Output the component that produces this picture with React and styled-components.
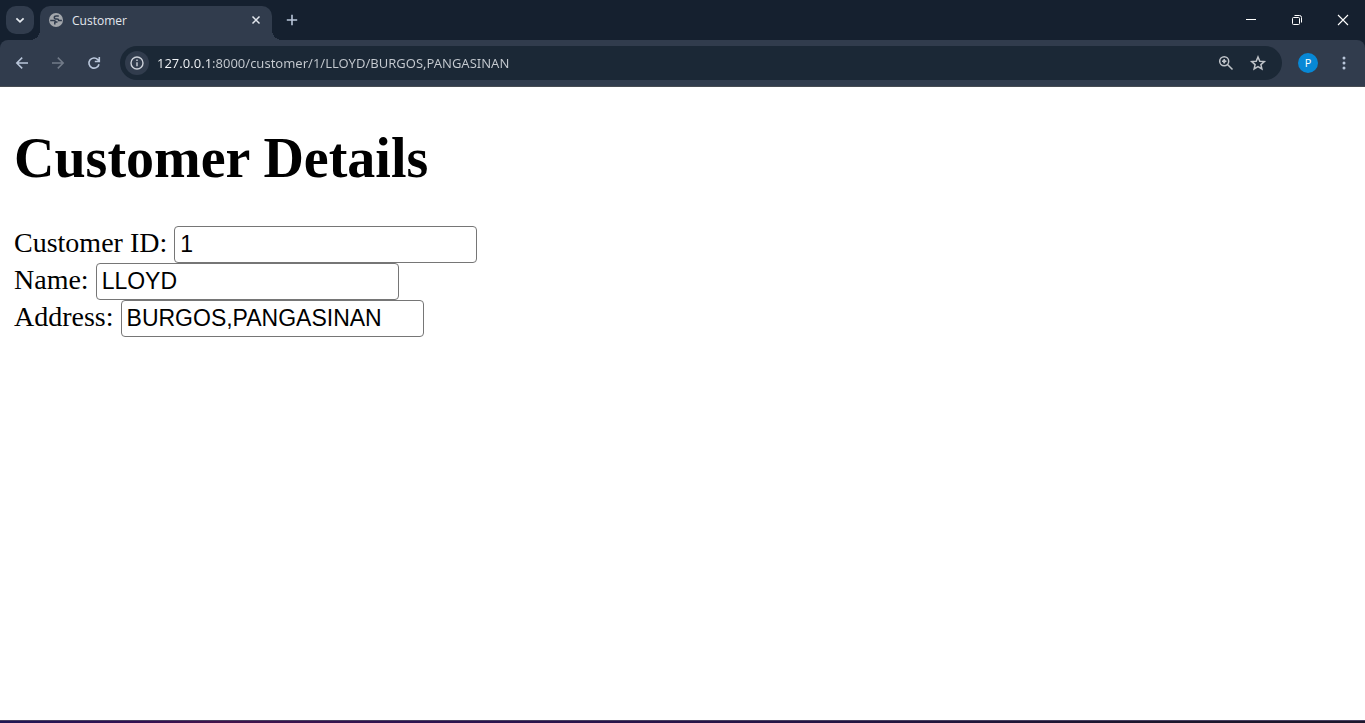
import React from "react";
import styled, { createGlobalStyle } from "styled-components";

const GlobalStyle = createGlobalStyle`
  body { margin: 0; background: #fff; }
  *, *::before, *::after { box-sizing: border-box; }
`;

const Window = styled.div`
  display: flex;
  flex-direction: column;
  min-height: 100vh;
`;

const TabStrip = styled.header`
  display: flex;
  align-items: flex-start;
  height: 40px;
  padding: 6px 0 0 6px;
  background: #15202f;
  font-family: "Open Sans", sans-serif;
`;

const IconButton = styled.button`
  display: flex;
  flex: none;
  align-items: center;
  justify-content: center;
  width: 28px;
  height: 28px;
  padding: 0;
  border: 0;
  border-radius: ${(p) => p.$radius || 0}px;
  background: ${(p) => p.$fill || "transparent"};
  color: ${(p) => p.$color || "#b9c6da"};
`;

const Tab = styled.div`
  position: relative;
  display: flex;
  align-items: center;
  width: 232px;
  height: 34px;
  margin: 0 6px;
  padding: 0 2px 6px 8px;
  border-radius: 10px 10px 0 0;
  background: #313c4d;
  color: #e3e7ee;

  &::before,
  &::after {
    content: "";
    position: absolute;
    bottom: 0;
    width: 10px;
    height: 10px;
  }
  &::before {
    right: 100%;
    background: radial-gradient(circle at 0 0, transparent 10px, #313c4d 10px);
  }
  &::after {
    left: 100%;
    background: radial-gradient(circle at 100% 0, transparent 10px, #313c4d 10px);
  }
`;

const TabTitle = styled.span`
  flex: 1;
  padding-left: 8px;
  font-size: 12px;
  line-height: 20px;
  padding-top: 2px;
`;

const WindowControls = styled.div`
  display: flex;
  flex: 1;
  justify-content: flex-end;
`;

const WindowButton = styled(IconButton)`
  width: 46px;
  color: #fff;
`;

const ToolbarBack = styled.div`
  background: #15202f;
`;

const Toolbar = styled.nav`
  display: flex;
  align-items: center;
  height: 47px;
  padding: 0 7px 0 8px;
  gap: 8px;
  border-bottom: 1px solid #474c52;
  border-radius: 8px 8px 0 0;
  background: #313c4d;
  font-family: "Open Sans", sans-serif;
`;

const AddressBar = styled.div`
  display: flex;
  flex: 1;
  align-items: center;
  height: 34px;
  margin: 0 4px;
  padding: 0 10px 0 5px;
  gap: 4px;
  border-radius: 17px;
  background: #1b2836;
`;

const SiteButton = styled(IconButton)`
  width: 24px;
  height: 24px;
`;

const AddressInput = styled.input`
  flex: 1;
  min-width: 0;
  padding: 0 0 0 4px;
  border: 0;
  outline: 0;
  background: linear-gradient(90deg, #f2f5f8 58px, #c6cbd1 58px);
  background-clip: text;
  color: transparent;
  font-family: "Noto Sans", sans-serif;
  font-size: 13px;
  line-height: 20px;
`;

const Avatar = styled.span`
  width: 20px;
  height: 20px;
  border-radius: 50%;
  background: #0788d6;
  color: #fff;
  font-family: "Open Sans", sans-serif;
  font-size: 11px;
  line-height: 20px;
  text-align: center;
`;

const Page = styled.main`
  flex: 1;
  padding: 39px 14px;
  background: #fff;
  color: #000;
  font-family: "Liberation Serif", serif;
  font-size: 28px;
`;

const Heading = styled.h1`
  margin: 0 0 36px;
  font-size: 56px;
  line-height: 64px;
`;

const Field = styled.div`
  display: flex;
  height: 37px;
  gap: 7px;
  line-height: 34px;
`;

const FieldInput = styled.input`
  width: 303px;
  height: 37px;
  padding: 0 5px;
  border: 1px solid #767676;
  border-radius: 4px;
  background: #fff;
  color: #000;
  font-family: "Liberation Sans", sans-serif;
  font-size: 23px;
`;

const DesktopEdge = styled.footer`
  height: 3px;
  border-top: 1px solid #47405f;
  background: linear-gradient(90deg, #1f1754, #321052 10%, #42134c 16%, #2d1350 30%, #241444 60%, #1c162c 85%);
`;

function Icon({ size = 20, stroke = 2, children }) {
  return (
    <svg width={size} height={size} viewBox={`0 0 ${size} ${size}`} fill="none" stroke="currentColor" strokeWidth={stroke} aria-hidden="true">
      {children}
    </svg>
  );
}

const fields = [
  { id: "customer-id", label: "Customer ID:", value: "1" },
  { id: "name", label: "Name:", value: "LLOYD" },
  { id: "address", label: "Address:", value: "BURGOS,PANGASINAN" },
];

export default function App() {
  return (
    <Window>
      <GlobalStyle />
      <TabStrip>
        <IconButton $fill="#313c4d" $radius={10} $color="#e6eaf0" aria-label="Search tabs">
          <Icon stroke={1.8}><path d="M6.4 8.4 10 11.8l3.6-3.4" /></Icon>
        </IconButton>
        <Tab>
          <Icon size={16}>
            <circle cx="8" cy="8" r="7" fill="#a3a7ac" stroke="none" />
            <path d="M10.8 3.9H8.2c-1.2 0-1.9.7-1.9 1.6 0 1 .8 1.6 2 1.6h.8c1 0 1.6.6 1.6 1.5h3.2M2.2 8.4h3.4c1.2 0 1.8.6 1.8 1.7h2.1M6.8 10v2.6" stroke="#313c4d" strokeWidth="1.5" />
          </Icon>
          <TabTitle>Customer</TabTitle>
          <IconButton $color="#e3e7ee" aria-label="Close tab">
            <Icon size={16} stroke={1.5}><path d="m4.5 4.5 7 7m0-7-7 7" /></Icon>
          </IconButton>
        </Tab>
        <IconButton aria-label="New tab">
          <Icon stroke={1.6}><path d="M10 4.8v10.4M4.8 10h10.4" /></Icon>
        </IconButton>
        <WindowControls>
          <WindowButton aria-label="Minimize">
            <Icon stroke={1}><path d="M6 9.5h10" /></Icon>
          </WindowButton>
          <WindowButton aria-label="Restore">
            <Icon stroke={1}>
              <rect x="6.5" y="7.5" width="7" height="7" rx="1" />
              <path d="M8.5 5.5h5a2 2 0 0 1 2 2v5" />
            </Icon>
          </WindowButton>
          <WindowButton aria-label="Close">
            <Icon stroke={1.1}><path d="m6 5 10 10m0-10L6 15" /></Icon>
          </WindowButton>
        </WindowControls>
      </TabStrip>
      <ToolbarBack>
        <Toolbar>
          <IconButton aria-label="Back">
            <Icon stroke={1.5}><path d="M16 10H4.8m5.4-5.4L4.8 10l5.4 5.4" /></Icon>
          </IconButton>
          <IconButton $color="#727b89" aria-label="Forward">
            <Icon stroke={1.5}><path d="M4 10h11.2M9.8 4.6l5.4 5.4-5.4 5.4" /></Icon>
          </IconButton>
          <IconButton aria-label="Reload">
            <Icon stroke={1.6}>
              <path d="M15 11.2A5.1 5.1 0 1 1 13.8 6.6l1.4 1.7M15.3 4v4.5h-4.5" />
            </Icon>
          </IconButton>
          <AddressBar>
            <SiteButton $fill="#313c4d" $radius={12} $color="#ccd1d9" aria-label="Site information">
              <Icon size={16} stroke={1.4}>
                <circle cx="8" cy="8" r="6" />
                <path d="M8 7.2v4M8 4.6v1.5" />
              </Icon>
            </SiteButton>
            <AddressInput aria-label="Address bar" defaultValue="127.0.0.1:8000/customer/1/LLOYD/BURGOS,PANGASINAN" />
            <IconButton $color="#c0c4c9" aria-label="Zoom">
              <Icon size={18} stroke={1.5}>
                <circle cx="7.2" cy="7.2" r="4.5" />
                <circle cx="7.2" cy="7.2" r="1.5" fill="currentColor" stroke="none" />
                <path d="m10.5 10.5 5 5M7.2 5v4.4M5 7.2h4.4" />
              </Icon>
            </IconButton>
            <IconButton $color="#c0c4c9" aria-label="Bookmark">
              <Icon size={18} stroke={1.5}>
                <path d="m9 3 1.8 4.2 4.5.4-3.4 3 1 4.4L9 12.7 5.1 15l1-4.4-3.4-3 4.5-.4z" />
              </Icon>
            </IconButton>
          </AddressBar>
          <IconButton aria-label="Profile"><Avatar>P</Avatar></IconButton>
          <IconButton aria-label="Menu">
            <Icon>
              <g fill="currentColor" stroke="none">
                <circle cx="10" cy="5" r="1.5" />
                <circle cx="10" cy="10" r="1.5" />
                <circle cx="10" cy="15" r="1.5" />
              </g>
            </Icon>
          </IconButton>
        </Toolbar>
      </ToolbarBack>
      <Page>
        <Heading>Customer Details</Heading>
        {fields.map((field) => (
          <Field key={field.id}>
            <label htmlFor={field.id}>{field.label}</label>
            <FieldInput id={field.id} type="text" defaultValue={field.value} />
          </Field>
        ))}
      </Page>
      <DesktopEdge />
    </Window>
  );
}
